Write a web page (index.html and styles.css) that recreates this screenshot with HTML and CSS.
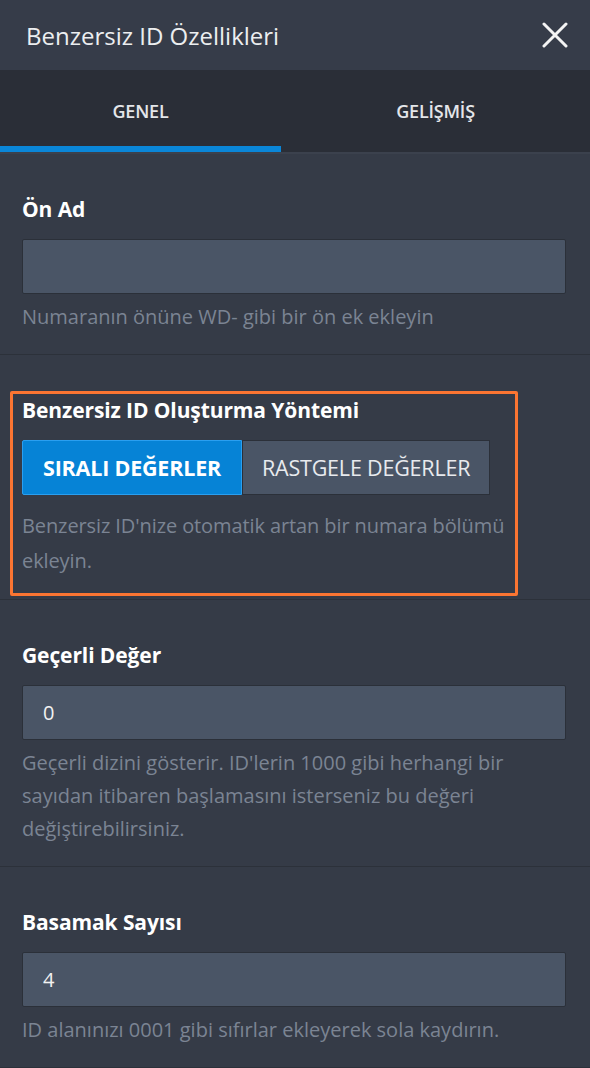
FILE: index.html
```html
<!DOCTYPE html>
<html lang="tr">
<head>
    <meta charset="UTF-8" />
    <title>Benzersiz ID Özellikleri</title>
    <link rel="stylesheet" href="styles.css">
</head>
<body>

<div class="panel">
    <div class="panel-header">
        <h1>Benzersiz ID Özellikleri</h1>
        <button class="close-btn" aria-label="Kapat">
            <svg width="26" height="26" viewBox="0 0 26 26">
                <path d="M2 2 L24 24 M24 2 L2 24" stroke="#f4f4f4" stroke-width="3" stroke-linecap="round" fill="none" />
            </svg>
        </button>
    </div>

    <div class="tabs">
        <div class="tab active">GENEL</div>
        <div class="tab">GELİŞMİŞ</div>
    </div>

    <div class="field">
        <label>Ön Ad</label>
        <input type="text" value="" />
        <p class="help">Numaranın önüne WD- gibi bir ön ek ekleyin</p>
    </div>

    <div class="field field-highlight">
        <div class="highlight-box">
            <label>Benzersiz ID Oluşturma Yöntemi</label>
            <div class="toggle">
                <button class="toggle-btn selected">SIRALI DEĞERLER</button>
                <button class="toggle-btn">RASTGELE DEĞERLER</button>
            </div>
            <p class="help help-box">Benzersiz ID'nize otomatik artan bir numara bölümü ekleyin.</p>
        </div>
    </div>

    <div class="field">
        <label>Geçerli Değer</label>
        <input type="text" value="0" />
        <p class="help">Geçerli dizini gösterir. ID'lerin 1000 gibi herhangi bir sayıdan itibaren başlamasını isterseniz bu değeri değiştirebilirsiniz.</p>
    </div>

    <div class="field">
        <label>Basamak Sayısı</label>
        <input type="text" value="4" />
        <p class="help">ID alanınızı 0001 gibi sıfırlar ekleyerek sola kaydırın.</p>
    </div>
</div>

</body>
</html>
```

FILE: styles.css
```css
body {
  margin: 0;
  font-family: "Open Sans", "Liberation Sans", sans-serif;
  background-color: #353b47;
  color: #fff;
}

.panel {
  width: 590px;
  min-height: 1068px;
  background-color: #353b47;
}

.panel-header {
  height: 70px;
  display: flex;
  align-items: center;
  justify-content: space-between;
  padding: 0 22px 0 26px;
  background-color: #363c49;
}

.panel-header h1 {
  margin: 0;
  font-size: 24px;
  font-weight: 400;
  color: #eceef0;
}

.close-btn {
  background: none;
  border: none;
  padding: 0;
  width: 26px;
  height: 26px;
  cursor: pointer;
}

.tabs {
  display: grid;
  grid-template-columns: 281px 1fr;
  height: 82px;
  background-color: #2a2e37;
  border-bottom: 2px solid #3b414d;
}

.tab {
  display: flex;
  align-items: center;
  justify-content: center;
  font-size: 18px;
  font-weight: 600;
  color: #e4e6ea;
  letter-spacing: -0.2px;
  border-bottom: 6px solid transparent;
  padding-top: 6px;
}

.tab.active {
  border-bottom-color: #0a86d8;
}

.field {
  padding: 43px 24px 21px 22px;
  border-bottom: 1px solid #2c313a;
}

.field label {
  display: block;
  font-size: 21px;
  font-weight: 700;
  line-height: 24px;
  color: #fff;
  letter-spacing: -0.1px;
}

.field input {
  display: block;
  box-sizing: border-box;
  width: 100%;
  height: 55px;
  margin-top: 18px;
  padding: 0 20px;
  font-family: inherit;
  font-size: 20px;
  color: #f2f2f2;
  background-color: #4a5566;
  border: 1px solid #2b3039;
  border-radius: 2px;
  outline: none;
}

.help {
  margin: 6px 0 0;
  font-size: 20px;
  line-height: 33px;
  color: #7b8493;
}

.field-highlight {
  padding: 36px 72px 3px 10px;
}

.highlight-box {
  border: 3px solid #fb7532;
  border-radius: 2px;
  padding: 4px 3px 15px 9px;
}

.toggle {
  display: flex;
  margin-top: 18px;
}

.toggle-btn {
  height: 55px;
  padding: 0 19px;
  font-family: inherit;
  font-size: 21.5px;
  font-weight: 400;
  color: #e8eaee;
  background-color: #4a5566;
  border: 1px solid #2b3039;
  letter-spacing: -0.2px;
  cursor: pointer;
}

.toggle-btn.selected {
  padding: 0 20px;
  font-weight: 700;
  color: #fff;
  background-color: #0683d6;
  border-color: #2a9ff0;
  border-radius: 2px 0 0 2px;
}

.help-box {
  margin-top: 13px;
  line-height: 35px;
  letter-spacing: -0.1px;
}
```
